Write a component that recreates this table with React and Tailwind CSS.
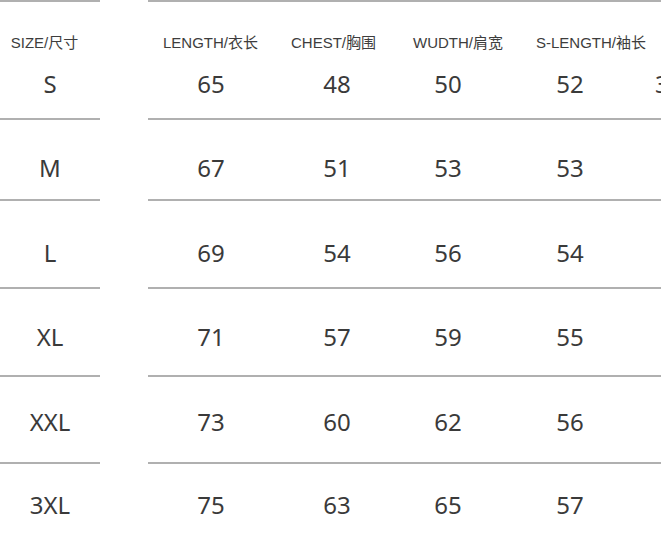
import React from "react";

const font = { fontFamily: '"Noto Sans", "Noto Sans CJK SC", sans-serif' };
const headFont = { fontFamily: '"Liberation Sans", "Noto Sans CJK SC", sans-serif' };

const rows = [
  { size: "S", vals: ["65", "48", "50", "52"], extra: "3" },
  { size: "M", vals: ["67", "51", "53", "53"] },
  { size: "L", vals: ["69", "54", "56", "54"] },
  { size: "XL", vals: ["71", "57", "59", "55"] },
  { size: "XXL", vals: ["73", "60", "62", "56"] },
  { size: "3XL", vals: ["75", "63", "65", "57"] },
];

const rowCls = [
  "h-[118px] pt-[70px]",
  "h-[81px] pt-[36px]",
  "h-[88px] pt-[40px]",
  "h-[88px] pt-[36px]",
  "h-[87px] pt-[33px]",
  "h-[78px] pt-[29px]",
];

const cellW = ["w-[126px]", "w-[126px]", "w-[96px]", "w-[148px]"];
const headW = ["w-[125px]", "w-[121px]", "w-[128px]", "w-[138px]"];
const heads = ["LENGTH/衣长", "CHEST/胸围", "WUDTH/肩宽", "S-LENGTH/袖长"];

export default function App() {
  return (
    <div
      className="w-[661px] h-[540px] bg-white overflow-hidden flex gap-[48px] text-[#3a3a3a]"
      style={font}
    >
      {/* size column */}
      <div className="w-[100px] shrink-0 flex flex-col">
        {rows.map((r, i) => (
          <div
            key={r.size}
            className={`relative shrink-0 border-t-2 border-[#b0b0b0] ${rowCls[i]}`}
          >
            {i === 0 && (
              <div
                className="absolute left-0 top-[33px] w-[89px] flex justify-center text-[15px] leading-[16px] text-[#3d3d3d] whitespace-nowrap"
                style={headFont}
              >
                SIZE/尺寸
              </div>
            )}
            <div className="text-center text-[24px] leading-[24px]">{r.size}</div>
          </div>
        ))}
      </div>

      {/* measurement columns */}
      <div className="flex-1 flex flex-col overflow-hidden">
        {rows.map((r, i) => (
          <div
            key={r.size}
            className={`relative shrink-0 border-t-2 border-[#b0b0b0] ${rowCls[i]}`}
          >
            {i === 0 && (
              <div
                className="absolute left-0 top-[33px] flex text-[15px] leading-[16px] text-[#3d3d3d] whitespace-nowrap"
                style={headFont}
              >
                {heads.map((h, k) => (
                  <div key={h} className={`${headW[k]} shrink-0 flex justify-center`}>
                    {h}
                  </div>
                ))}
              </div>
            )}
            <div className="flex text-[24px] leading-[24px] whitespace-nowrap">
              {r.vals.map((v, k) => (
                <div key={k} className={`${cellW[k]} shrink-0 text-center`}>
                  {v}
                </div>
              ))}
              {r.extra && <div className="shrink-0 pl-[11px]">{r.extra}</div>}
            </div>
          </div>
        ))}
      </div>
    </div>
  );
}
